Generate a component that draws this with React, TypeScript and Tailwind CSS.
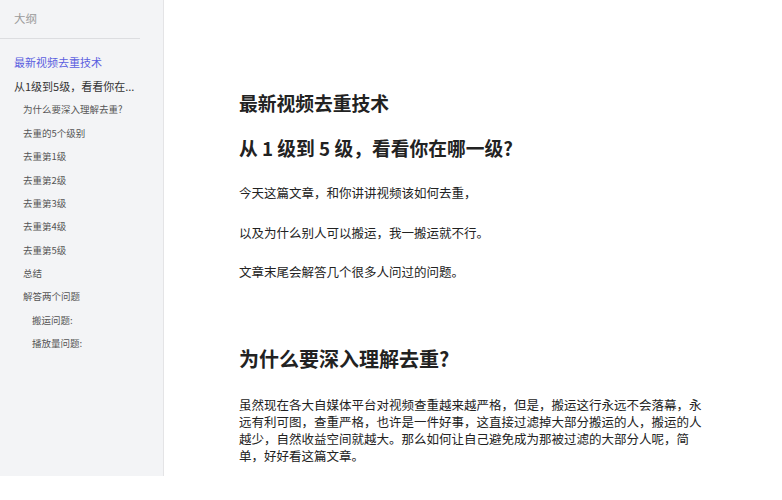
import React from "react";

const font = { fontFamily: '"Noto Sans CJK SC", "Noto Sans", sans-serif' };

type Item = { text: string; level: 1 | 2 | 3 | 4; active?: boolean };

const items: Item[] = [
  { text: "最新视频去重技术", level: 1, active: true },
  { text: "从1级到5级，看看你在...", level: 2 },
  { text: "为什么要深入理解去重?", level: 3 },
  { text: "去重的5个级别", level: 3 },
  { text: "去重第1级", level: 3 },
  { text: "去重第2级", level: 3 },
  { text: "去重第3级", level: 3 },
  { text: "去重第4级", level: 3 },
  { text: "去重第5级", level: 3 },
  { text: "总结", level: 3 },
  { text: "解答两个问题", level: 3 },
  { text: "搬运问题:", level: 4 },
  { text: "播放量问题:", level: 4 },
];

function itemClass(it: Item) {
  if (it.active) return "pl-[14px] text-[11px] text-[#5b5ee0]";
  if (it.level === 2) return "pl-[14px] text-[11px] text-[#333333]";
  if (it.level === 3) return "pl-[23px] text-[9.5px] text-[#555555]";
  return "pl-[32px] text-[9.5px] text-[#555555]";
}

export default function App() {
  return (
    <div className="flex h-[476px] w-[782px] bg-white" style={font}>
      <aside className="flex h-full w-[164px] shrink-0 flex-col border-r border-[#e4e4e6] bg-[#f3f4f6] shadow-[1px_1px_3px_rgba(0,0,0,0.06)]">
        <div className="flex h-[39px] w-[140px] items-center border-b border-[#dcdde0] pl-[14px] text-[11.5px] text-[#9b9b9b]">
          大纲
        </div>
        <ul className="mt-[12px] flex flex-col">
          {items.map((it, i) => (
            <li
              key={i}
              className={`flex h-[23.4px] items-center whitespace-nowrap ${itemClass(it)}`}
            >
              {it.text}
            </li>
          ))}
        </ul>
      </aside>
      <main className="flex-1 bg-white pl-[75px] pt-[90px] text-[#222222]">
        <div className="w-[470px]">
          <h1 className="text-[18.75px] font-semibold leading-[26px]">最新视频去重技术</h1>
          <h2 className="mt-[19px] text-[18.75px] font-semibold leading-[26px]">
            从 1 级到 5 级，看看你在哪一级?
          </h2>
          <p className="mt-[23px] text-[12.5px] leading-[17px]">今天这篇文章，和你讲讲视频该如何去重，</p>
          <p className="mt-[22.5px] text-[12.5px] leading-[17px]">以及为什么别人可以搬运，我一搬运就不行。</p>
          <p className="mt-[22px] text-[12.5px] leading-[17px]">文章末尾会解答几个很多人问过的问题。</p>
          <h2 className="mt-[65.5px] text-[20px] font-semibold leading-[28px]">为什么要深入理解去重?</h2>
          <p className="mt-[22.5px] text-[12.5px] leading-[17px]">
            虽然现在各大自媒体平台对视频查重越来越严格，但是，搬运这行永远不会落幕，永远有利可图，查重严格，也许是一件好事，这直接过滤掉大部分搬运的人，搬运的人越少，自然收益空间就越大。那么如何让自己避免成为那被过滤的大部分人呢，简单，好好看这篇文章。
          </p>
        </div>
      </main>
    </div>
  );
}
